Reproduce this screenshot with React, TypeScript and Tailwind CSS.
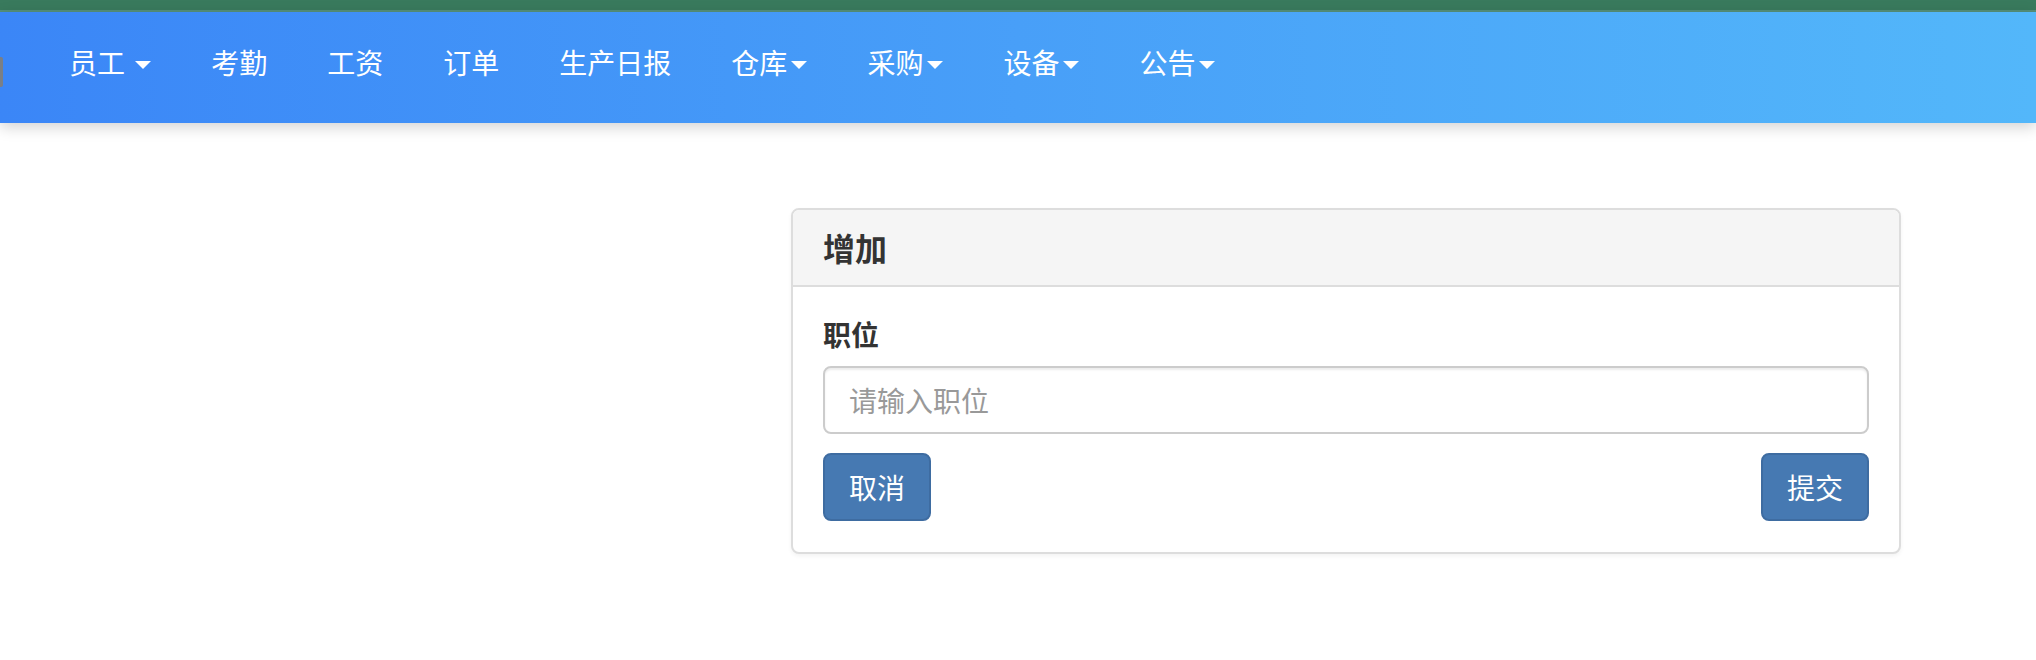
import React from "react";

const font = { fontFamily: '"Noto Sans CJK SC", "Noto Sans", sans-serif' };

function Caret() {
  return (
    <span className="inline-block ml-[4px] w-0 h-0 border-t-[8px] border-t-white border-l-[8px] border-l-transparent border-r-[8px] border-r-transparent align-middle mb-[3px]" />
  );
}

const items: { label: string; caret?: boolean; space?: boolean }[] = [
  { label: "员工", caret: true, space: true },
  { label: "考勤" },
  { label: "工资" },
  { label: "订单" },
  { label: "生产日报" },
  { label: "仓库", caret: true },
  { label: "采购", caret: true },
  { label: "设备", caret: true },
  { label: "公告", caret: true },
];

export default function App() {
  return (
    <div className="w-[2036px] h-[660px] bg-white overflow-hidden" style={font}>
      <div className="h-[10px] bg-[#397a5d]" />
      <div className="h-[2px] bg-[#55907a]" />
      <nav className="relative h-[111px] bg-linear-to-r from-[#3b86f7] via-[#489ff8] to-[#53b7fa] shadow-[0_4px_14px_rgba(0,0,0,0.18)] z-10">
        <div className="absolute left-0 top-[45px] w-[3px] h-[30px] bg-[#7a7f86] rounded-r-[2px]" />
        <ul className="flex pl-[39px]">
          {items.map((it) => (
            <li key={it.label} className="px-[30px] pt-[30px] pb-[30px] text-[28px] leading-[40px] text-white whitespace-pre">
              {it.label}
              {it.space ? " " : ""}
              {it.caret ? <Caret /> : null}
            </li>
          ))}
        </ul>
      </nav>
      <div className="ml-[791px] mt-[85px] w-[1110px] border-[2px] border-[#dddddd] rounded-[8px] bg-white shadow-[0_2px_4px_rgba(0,0,0,0.05)]">
        <div className="bg-[#f5f5f5] border-b-[2px] border-[#dddddd] rounded-t-[6px] px-[30px] py-[19px] h-[77px]">
          <h3 className="text-[32px] leading-[36px] font-bold text-[#333333]">增加</h3>
        </div>
        <div className="px-[30px] pt-[27px] pb-[31px]">
          <label className="block text-[28px] leading-[40px] font-bold text-[#333333] mb-[12px]">职位</label>
          <input
            className="block w-full h-[68px] border-[2px] border-[#cccccc] rounded-[8px] px-[24px] text-[28px] text-[#555] placeholder:text-[#999999] outline-none shadow-[inset_0_2px_2px_rgba(0,0,0,0.075)]"
            placeholder="请输入职位"
            style={font}
          />
          <div className="flex justify-between mt-[19px]">
            <button className="h-[68px] w-[108px] bg-[#4679b2] border-[2px] border-[#3e6ca1] rounded-[8px] text-white text-[28px] leading-[40px]" style={font}>
              取消
            </button>
            <button className="h-[68px] w-[108px] bg-[#4679b2] border-[2px] border-[#3e6ca1] rounded-[8px] text-white text-[28px] leading-[40px]" style={font}>
              提交
            </button>
          </div>
        </div>
      </div>
    </div>
  );
}
